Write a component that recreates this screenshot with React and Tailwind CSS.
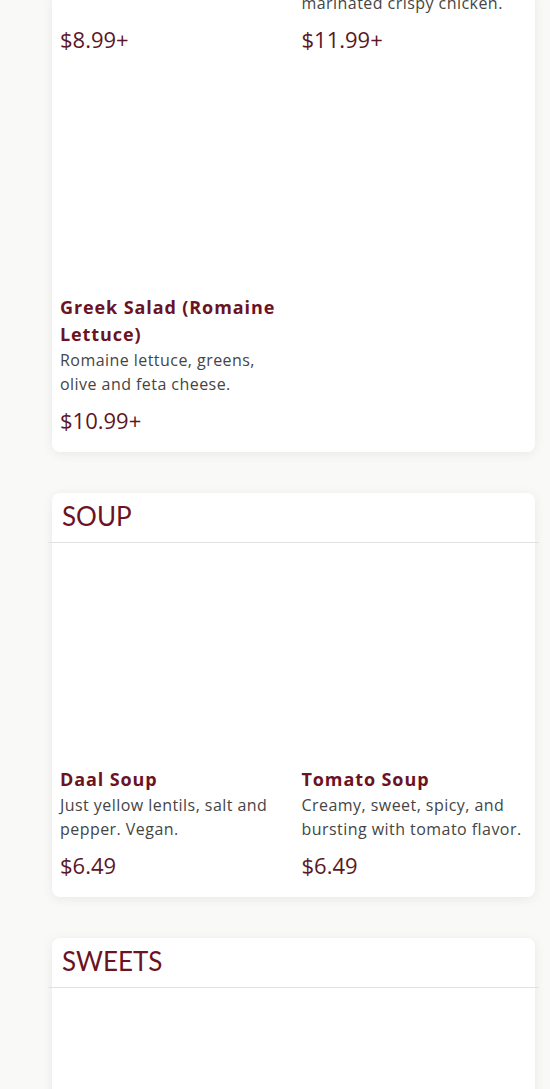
import React from "react";

const body = { fontFamily: '"Open Sans", "Liberation Sans", sans-serif' };
const head = { fontFamily: 'Lato, "Open Sans", sans-serif' };

function Item({ title, desc, price, first }) {
  return (
    <div className={`flex flex-col px-2 pb-[17px] ${first ? "pt-0" : "pt-2"}`}>
      {!first && <div className="h-[215px]" />}
      {title && (
        <div className="text-[18px] leading-[27px] font-bold text-[#6b1223] tracking-[0.9px]">
          {title}
        </div>
      )}
      {desc && (
        <div className="text-[16px] leading-6 text-[#454545] tracking-[0.45px] mb-[9px]">{desc}</div>
      )}
      <div className="mt-auto text-[22px] leading-[30px] text-[#5c1626]">{price}</div>
    </div>
  );
}

function Card({ title, children, className = "" }) {
  return (
    <div className={`bg-white rounded-lg shadow-[0_2px_12px_rgba(0,0,0,0.07)] ${className}`}>
      {title && (
        <>
          <div
            className="h-[49px] flex items-center pl-[10px] pb-[3px] text-[26px] leading-none text-[#6b1223]"
            style={head}
          >
            {title}
          </div>
          <div className="-mx-1 h-px bg-[#e2e2e2]" />
        </>
      )}
      {children}
    </div>
  );
}

export default function App() {
  return (
    <div className="min-h-[1089px] h-[1089px] overflow-hidden bg-[#f9f9f7]" style={body}>
      <div className="pl-[52px] pr-[15px] flex flex-col gap-[41px] -mt-[9px]">
        <Card className="rounded-t-none">
          <div className="grid grid-cols-2">
            <Item first price="$8.99+" />
            <Item first desc="marinated crispy chicken." price="$11.99+" />
            <Item
              title="Greek Salad (Romaine Lettuce)"
              desc="Romaine lettuce, greens, olive and feta cheese."
              price="$10.99+"
            />
            <div />
          </div>
        </Card>
        <Card title="SOUP">
          <div className="grid grid-cols-2">
            <Item title="Daal Soup" desc="Just yellow lentils, salt and pepper. Vegan." price="$6.49" />
            <Item
              title="Tomato Soup"
              desc="Creamy, sweet, spicy, and bursting with tomato flavor."
              price="$6.49"
            />
          </div>
        </Card>
        <Card title="SWEETS">
          <div className="h-[300px]" />
        </Card>
      </div>
    </div>
  );
}
